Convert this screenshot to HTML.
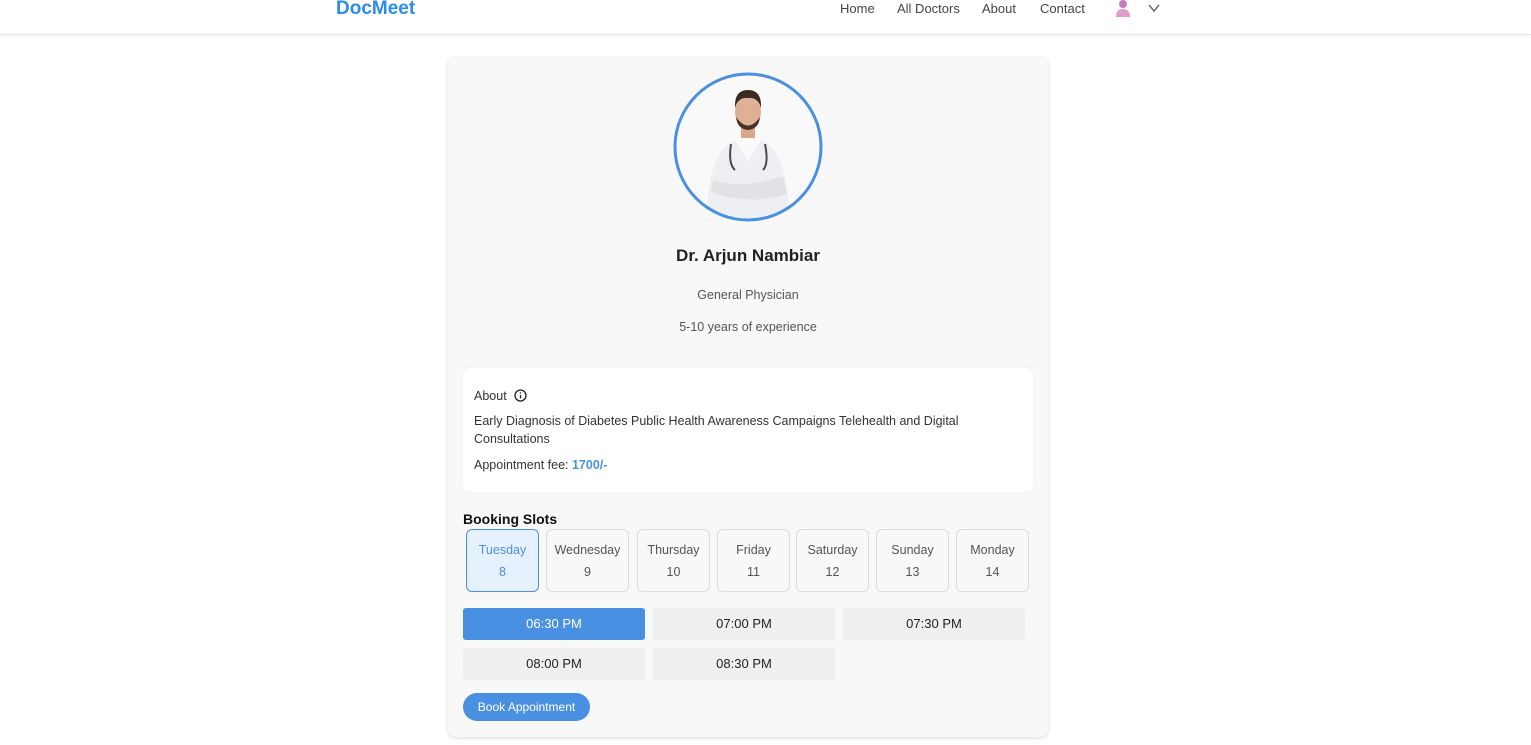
<!DOCTYPE html>
<html><head><style>
*{box-sizing:border-box;margin:0;padding:0}
body{width:1531px;height:745px;background:#fff;font-family:"Liberation Sans",sans-serif;position:relative;overflow:hidden;color:#333}
.nav{position:absolute;left:0;top:0;width:1531px;height:35px;border-bottom:1px solid #e5e5e5;box-shadow:0 1px 3px rgba(0,0,0,.06)}
.logo{position:absolute;left:336px;top:-2px;font-size:19px;font-weight:bold;color:#2b8bf0}
.nl{position:absolute;top:1px;font-size:13px;color:#444}
.card{position:absolute;left:448px;top:57px;width:600px;height:680px;background:#f8f8f8;border-radius:8px;box-shadow:0 1px 4px rgba(0,0,0,.15)}
.c{position:absolute;left:0;width:600px;text-align:center}
.about{position:absolute;left:15px;top:311px;width:570px;height:124px;background:#fff;border-radius:6px;box-shadow:0 0 2px rgba(0,0,0,.06);font-size:12.5px;color:#333}
.day{position:absolute;top:472px;height:63px;border:1px solid #ddd;border-radius:6px;text-align:center;font-size:12.5px;color:#555}
.day div{margin-top:13px}
.day div+div{margin-top:8px}
.day.sel{background:#e6f1ff;border-color:#4a90e2;color:#4a90e2}
.slot{position:absolute;width:182px;height:32px;background:#efefef;border-radius:3px;text-align:center;line-height:32px;font-size:13px;color:#222}
.slot.sel{background:#4a90e2;color:#fff}
</style></head><body>
<div class="nav">
<div class="logo">DocMeet</div>
<div class="nl" style="left:840px">Home</div>
<div class="nl" style="left:897px">All Doctors</div>
<div class="nl" style="left:982px">About</div>
<div class="nl" style="left:1040px">Contact</div>
<svg style="position:absolute;left:1114px;top:0" width="18" height="18"><circle cx="9" cy="4" r="4" fill="#c77ac0"/><path d="M2 17 Q2 9 9 9 Q16 9 16 17Z" fill="#e59bc8"/></svg>
<svg style="position:absolute;left:1147px;top:3px" width="14" height="10"><path d="M2 2 L7 8 L12 2" stroke="#666" stroke-width="1.4" fill="none"/></svg>
</div>
<div class="card">
<svg style="position:absolute;left:225px;top:15px" width="150" height="150">
<defs><clipPath id="cp"><circle cx="75" cy="75" r="73"/></clipPath></defs>
<circle cx="75" cy="75" r="73" fill="#f9f9f9"/>
<g clip-path="url(#cp)">
<path d="M34 150 Q34 80 62 68 L88 68 Q116 80 116 150Z" fill="#eeeff2"/>
<path d="M40 108 Q70 118 110 104 L114 122 Q75 134 38 120Z" fill="#e0e2e6"/>
<path d="M62 68 L75 90 L88 68 Z" fill="#fafafa"/>
<path d="M58 72 Q55 92 62 98 M92 72 Q96 92 90 98" stroke="#4a4a4a" stroke-width="2" fill="none"/>
<rect x="68" y="52" width="14" height="14" fill="#d9a88a"/>
<ellipse cx="75" cy="40" rx="13" ry="16" fill="#e0b096"/>
<path d="M62 36 Q61 18 75 18 Q89 18 88 36 Q85 25 75 26 Q65 25 62 36Z" fill="#3a2a22"/>
<path d="M63 45 Q75 62 87 45 Q86 57 75 58 Q64 57 63 45Z" fill="#4a3326"/>
</g>
<circle cx="75" cy="75" r="73" fill="none" stroke="#4a90e2" stroke-width="3"/>
</svg>
<div class="c" style="top:189px;font-size:17px;font-weight:bold;color:#222">Dr. Arjun Nambiar</div>
<div class="c" style="top:231px;font-size:12.5px;color:#555">General Physician</div>
<div class="c" style="top:263px;font-size:12.5px;color:#555">5-10 years of experience</div>
<div class="about">
<div style="position:absolute;left:11px;top:21px">About <svg style="vertical-align:-2px;margin-left:4px" width="13" height="13"><circle cx="6.5" cy="6.5" r="5.5" stroke="#222" stroke-width="1.3" fill="none"/><path d="M6.5 6 V9.5" stroke="#222" stroke-width="1.3"/><circle cx="6.5" cy="4" r=".8" fill="#222"/></svg></div>
<div style="position:absolute;left:11px;top:44px;width:520px;line-height:18px">Early Diagnosis of Diabetes Public Health Awareness Campaigns Telehealth and Digital Consultations</div>
<div style="position:absolute;left:11px;top:90px">Appointment fee: <b style="color:#4a90e2">1700/-</b></div>
</div>
<div style="position:absolute;left:15px;top:454px;font-size:14px;font-weight:bold;color:#111">Booking Slots</div>
<div class="day sel" style="left:18px;width:73px"><div>Tuesday</div><div>8</div></div>
<div class="day" style="left:98px;width:83px"><div>Wednesday</div><div>9</div></div>
<div class="day" style="left:189px;width:73px"><div>Thursday</div><div>10</div></div>
<div class="day" style="left:269px;width:73px"><div>Friday</div><div>11</div></div>
<div class="day" style="left:348px;width:73px"><div>Saturday</div><div>12</div></div>
<div class="day" style="left:428px;width:73px"><div>Sunday</div><div>13</div></div>
<div class="day" style="left:508px;width:73px"><div>Monday</div><div>14</div></div>
<div class="slot sel" style="left:15px;top:551px">06:30 PM</div>
<div class="slot" style="left:205px;top:551px">07:00 PM</div>
<div class="slot" style="left:395px;top:551px">07:30 PM</div>
<div class="slot" style="left:15px;top:591px">08:00 PM</div>
<div class="slot" style="left:205px;top:591px">08:30 PM</div>
<div style="position:absolute;left:15px;top:636px;width:127px;height:28px;border-radius:14px;background:#4a90e2;color:#fff;font-size:12px;text-align:center;line-height:28px">Book Appointment</div>
</div>
</body></html>
